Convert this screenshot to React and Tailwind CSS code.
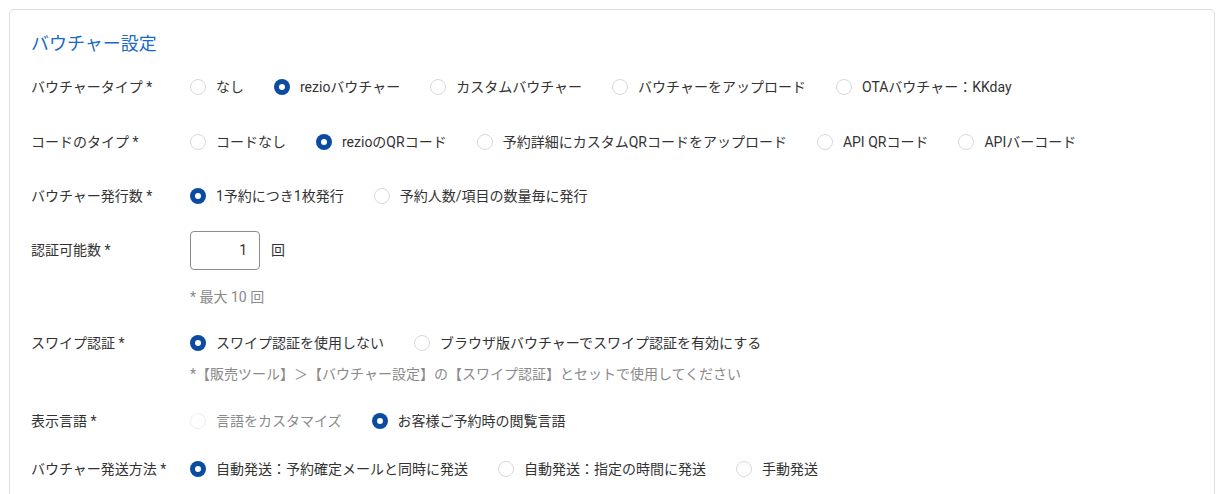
import React from 'react'

const font = { fontFamily: 'Roboto, "Noto Sans CJK JP", sans-serif' }

const Radio = ({ label, checked, disabled }) => (
  <label className="flex items-center gap-[10px] shrink-0">
    {checked ? (
      <span className="w-4 h-4 rounded-full bg-[#0b4ba0] flex items-center justify-center">
        <span className="w-[6px] h-[6px] rounded-full bg-white" />
      </span>
    ) : (
      <span className={`w-4 h-4 rounded-full border ${disabled ? 'border-[#eeeeee]' : 'border-[#d9d9d9]'} bg-white`} />
    )}
    <span className={disabled ? 'text-[#8a8a8a]' : 'text-[#333333]'}>{label}</span>
  </label>
)

const Row = ({ label, h, children }) => (
  <div className={`flex items-center ${h}`}>
    <div className="w-[159px] shrink-0 text-[#333333]">{label}</div>
    {children}
  </div>
)

const Options = ({ items }) => (
  <div className="flex items-center gap-[30px]">
    {items.map((it) => (
      <Radio key={it.label} {...it} />
    ))}
  </div>
)

export default function App() {
  return (
    <div className="bg-white min-h-screen p-[9px] text-[14px] leading-5" style={font}>
      <div className="border border-[#dcdcdc] rounded-[5px] pl-[21px] pr-4 pb-4">
        <div className="h-[50px] pt-[22px]">
          <h2 className="text-[18px] leading-6 text-[#1a6bc4]">バウチャー設定</h2>
        </div>

        <Row label="バウチャータイプ *" h="h-[54px]">
          <Options
            items={[
              { label: 'なし' },
              { label: 'rezioバウチャー', checked: true },
              { label: 'カスタムバウチャー' },
              { label: 'バウチャーをアップロード' },
              { label: 'OTAバウチャー：KKday' },
            ]}
          />
        </Row>

        <Row label="コードのタイプ *" h="h-[55px]">
          <Options
            items={[
              { label: 'コードなし' },
              { label: 'rezioのQRコード', checked: true },
              { label: '予約詳細にカスタムQRコードをアップロード' },
              { label: 'API QRコード' },
              { label: 'APIバーコード' },
            ]}
          />
        </Row>

        <Row label="バウチャー発行数 *" h="h-[54px]">
          <Options
            items={[
              { label: '1予約につき1枚発行', checked: true },
              { label: '予約人数/項目の数量毎に発行' },
            ]}
          />
        </Row>

        <Row label="認証可能数 *" h="h-[54px]">
          <div className="flex items-center gap-[11px]">
            <div className="w-[70px] h-[39px] border border-[#8c8c8c] rounded-[4px] flex items-center justify-end pr-[12px] text-[#333333]">
              1
            </div>
            <span className="text-[#333333]">回</span>
          </div>
        </Row>

        <div className="h-[40px] flex items-center pl-[159px] text-[#8a8a8a]">* 最大 10 回</div>

        <div className="h-[77px] pt-[10px]">
          <Row label="スワイプ認証 *" h="h-[32px]">
            <Options
              items={[
                { label: 'スワイプ認証を使用しない', checked: true },
                { label: 'ブラウザ版バウチャーでスワイプ認証を有効にする' },
              ]}
            />
          </Row>
          <div className="mt-[5px] h-5 flex items-center pl-[159px] text-[#8a8a8a]">
            *【販売ツール】＞【バウチャー設定】の【スワイプ認証】とセットで使用してください
          </div>
        </div>

        <Row label="表示言語 *" h="h-[54px]">
          <Options
            items={[
              { label: '言語をカスタマイズ', disabled: true },
              { label: 'お客様ご予約時の閲覧言語', checked: true },
            ]}
          />
        </Row>

        <Row label="バウチャー発送方法 *" h="h-[42px]">
          <Options
            items={[
              { label: '自動発送：予約確定メールと同時に発送', checked: true },
              { label: '自動発送：指定の時間に発送' },
              { label: '手動発送' },
            ]}
          />
        </Row>
      </div>
    </div>
  )
}
